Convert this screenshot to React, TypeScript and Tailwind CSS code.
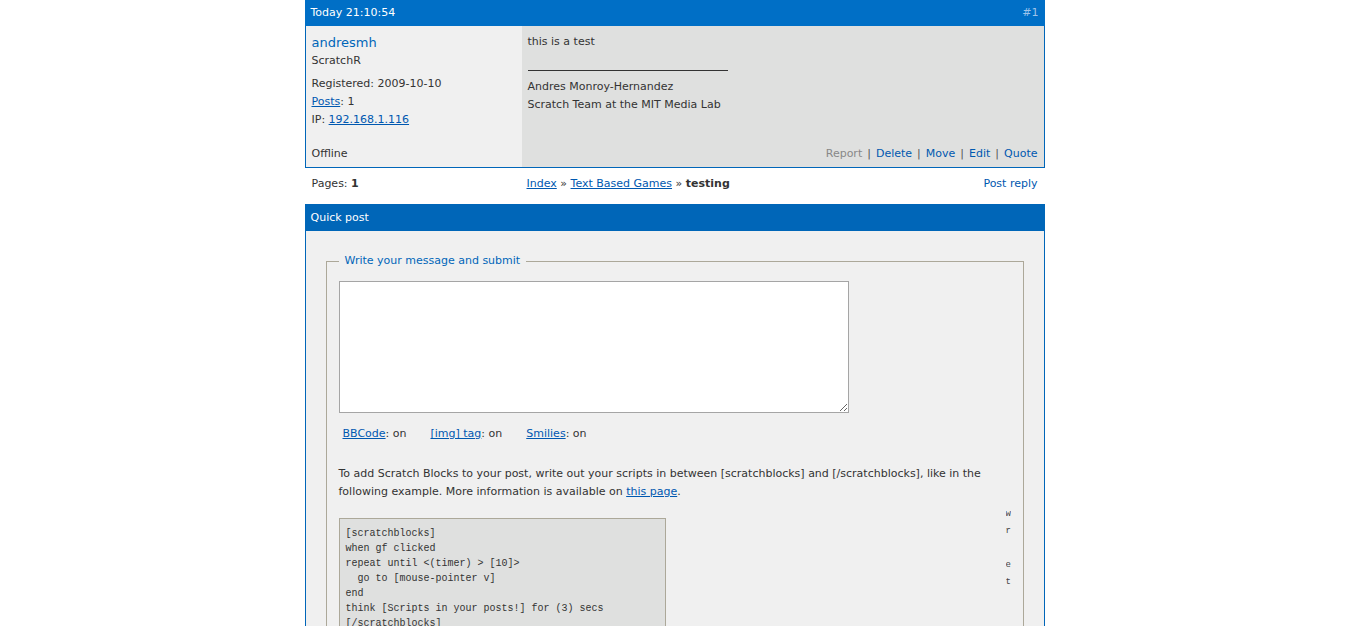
export default function App() {
  const font = { fontFamily: '"DejaVu Sans", Verdana, sans-serif' }
  return (
    <div className="min-h-[626px] bg-white text-[11px] leading-[18px] text-[#333]" style={font}>
      <div className="mx-auto w-[740px]">
        {/* post */}
        <div className="flex h-[26px] items-center justify-between bg-[#006fc6] px-[6px] text-white">
          <span>Today 21:10:54</span>
          <span className="text-[#9ec3ea]">#1</span>
        </div>
        <div className="flex border border-t-0 border-[#0066b9]">
          <div className="w-[216px] shrink-0 bg-[#f0f0f0] px-[6px] pt-[8px] pb-[4px]">
            <div className="text-[13px] text-[#0066b9]">andresmh</div>
            <div className="leading-[17px]">ScratchR</div>
            <div className="mt-[6px]">Registered: 2009-10-10</div>
            <div>
              <a className="text-[#0058b0] underline">Posts</a>: 1
            </div>
            <div>
              IP: <a className="text-[#0058b0] underline">192.168.1.116</a>
            </div>
            <div className="mt-[16px]">Offline</div>
          </div>
          <div className="flex flex-1 flex-col justify-between bg-[#dfe0df] px-[6px] pt-[7px] pb-[4px]">
            <div>
              <div>this is a test</div>
              <div className="mt-[19px] w-[200px] border-t border-[#333]" />
              <div className="mt-[7px]">Andres Monroy-Hernandez</div>
              <div>Scratch Team at the MIT Media Lab</div>
            </div>
            <div className="flex justify-end gap-[5px] text-[#0058b0]">
              <span className="text-[#888]">Report</span>
              <span className="text-[#555]">|</span>
              <span>Delete</span>
              <span className="text-[#555]">|</span>
              <span>Move</span>
              <span className="text-[#555]">|</span>
              <span>Edit</span>
              <span className="text-[#555]">|</span>
              <span>Quote</span>
            </div>
          </div>
        </div>

        {/* links */}
        <div className="flex h-[36px] items-start pt-[7px]">
          <div className="w-[216px] shrink-0 pl-[7px]">
            Pages: <span className="font-bold">1</span>
          </div>
          <div className="flex-1 pl-[6px]">
            <a className="text-[#0058b0] underline">Index</a> »{' '}
            <a className="text-[#0058b0] underline">Text Based Games</a> »{' '}
            <span className="font-bold">testing</span>
          </div>
          <div className="pr-[7px] text-[#0058b0]">Post reply</div>
        </div>

        {/* quick post */}
        <div className="flex h-[27px] items-center bg-[#0066b8] px-[6px] text-white">Quick post</div>
        <div className="h-[395px] overflow-hidden border-x border-[#0066b9] bg-[#f0f0f0] px-[20px] pt-[21px]">
          <fieldset className="border border-[#aca899] px-[12px] pb-[12px]">
            <legend className="px-[6px] text-[#0066b9]">Write your message and submit</legend>
            <textarea
              className="mt-[11px] block h-[132px] w-[510px] border border-[#a5a5a5] bg-white"
              readOnly
            />
            <div className="mt-[12px] flex pl-[4px]">
              <span className="mr-[24px]">
                <a className="text-[#0058b0] underline">BBCode</a>: on
              </span>
              <span className="mr-[24px]">
                <a className="text-[#0058b0] underline">[img] tag</a>: on
              </span>
              <span>
                <a className="text-[#0058b0] underline">Smilies</a>: on
              </span>
            </div>
            <p className="mt-[22px]">
              To add Scratch Blocks to your post, write out your scripts in between [scratchblocks] and
              [/scratchblocks], like in the following example. More information is available on{' '}
              <a className="text-[#0058b0] underline">this page</a>.
            </p>
            <div className="mt-[5px] flex justify-between">
              <pre
                className="mt-[12px] w-[327px] border border-[#aca899] bg-[#dfe0df] px-[6px] pt-[7px] pb-[6px] text-[10px] leading-[15px] text-[#333]"
                style={{ fontFamily: '"Liberation Mono", monospace' }}
              >
                {`[scratchblocks]
when gf clicked
repeat until <(timer) > [10]>
  go to [mouse-pointer v]
end
think [Scripts in your posts!] for (3) secs
[/scratchblocks]`}
              </pre>
              <div
                className="w-[5px] overflow-hidden text-[9px] leading-[17px] text-[#444]"
                style={{ fontFamily: '"Liberation Mono", monospace' }}
              >
                <div>w</div>
                <div>r</div>
                <div>&nbsp;</div>
                <div>e</div>
                <div>t</div>
              </div>
            </div>
          </fieldset>
        </div>
      </div>
    </div>
  )
}
